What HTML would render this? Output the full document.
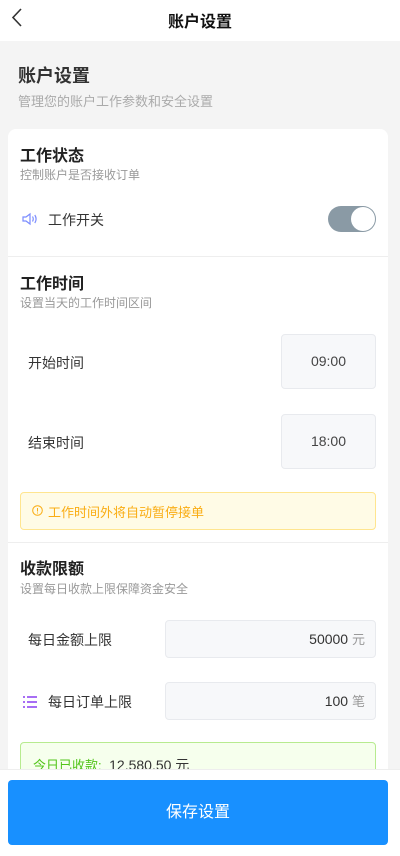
<!DOCTYPE html>
<html><head><meta charset="utf-8"><style>
*{margin:0;padding:0;box-sizing:border-box}
body{width:400px;height:856px;overflow:hidden;background:#f4f4f4;font-family:"Liberation Sans","Noto Sans CJK SC",sans-serif;color:#222;position:relative}
.abs{position:absolute}
.hdr{left:0;top:0;width:400px;height:41px;background:#fff}
.card{left:8px;top:129px;width:380px;height:700px;background:#fff;border-radius:8px}
.t{font-weight:bold;font-size:16px;color:#222}
.s{font-size:12px;color:#999}
.lbl{font-size:14px;color:#333}
.box{background:#f7f8fa;border:1px solid #e8eaee;border-radius:4px}
.div{left:8px;width:380px;height:1px;background:#eee}
</style></head><body>
<div class="abs hdr"></div>
<svg class="abs" style="left:10px;top:7px" width="14" height="22" viewBox="0 0 14 22"><path d="M11 2 L3 10.5 L11 19" fill="none" stroke="#333" stroke-width="1.6"/></svg>
<div class="abs" style="left:0;width:400px;top:8px;text-align:center;font-size:16px;font-weight:bold;color:#111">账户设置</div>
<div class="abs" style="left:18px;top:62px;font-size:18px;font-weight:bold;color:#333">账户设置</div>
<div class="abs" style="left:18px;top:91px;font-size:13px;color:#aaa">管理您的账户工作参数和安全设置</div>
<div class="abs card"></div>
<div class="abs t" style="left:20px;top:142px">工作状态</div>
<div class="abs s" style="left:20px;top:166px">控制账户是否接收订单</div>
<svg class="abs" style="left:22px;top:212px" width="16" height="14" viewBox="0 0 16 14"><path d="M1 5h3l4-3v10l-4-3H1z" fill="none" stroke="#7b8cff" stroke-width="1.2"/><path d="M10.5 4.5q1.5 2.5 0 5M12.8 3q2.6 4 0 8" fill="none" stroke="#7b8cff" stroke-width="1.2"/></svg>
<div class="abs lbl" style="left:48px;top:210px">工作开关</div>
<div class="abs" style="left:328px;top:206px;width:48px;height:26px;border-radius:13px;background:#8a9aa5"></div>
<div class="abs" style="left:351px;top:207px;width:24px;height:24px;border-radius:12px;background:#fff"></div>
<div class="abs div" style="top:256px"></div>
<div class="abs t" style="left:20px;top:270px">工作时间</div>
<div class="abs s" style="left:20px;top:294px">设置当天的工作时间区间</div>
<div class="abs lbl" style="left:28px;top:353px">开始时间</div>
<div class="abs box" style="left:281px;top:334px;width:95px;height:55px;text-align:center;line-height:53px;font-size:14px;color:#444">09:00</div>
<div class="abs lbl" style="left:28px;top:433px">结束时间</div>
<div class="abs box" style="left:281px;top:414px;width:95px;height:55px;text-align:center;line-height:53px;font-size:14px;color:#444">18:00</div>
<div class="abs" style="left:20px;top:492px;width:356px;height:38px;background:#fffbe6;border:1px solid #ffe58f;border-radius:4px"></div>
<svg class="abs" style="left:32px;top:505px" width="11" height="11" viewBox="0 0 11 11"><circle cx="5.5" cy="5.5" r="4.8" fill="none" stroke="#faad14"/><path d="M5.5 3v3.5M5.5 7.5v1" stroke="#faad14"/></svg>
<div class="abs" style="left:48px;top:502px;font-size:13px;color:#faad14">工作时间外将自动暂停接单</div>
<div class="abs div" style="top:542px"></div>
<div class="abs t" style="left:20px;top:555px">收款限额</div>
<div class="abs s" style="left:20px;top:580px">设置每日收款上限保障资金安全</div>
<div class="abs lbl" style="left:28px;top:630px">每日金额上限</div>
<div class="abs box" style="left:165px;top:620px;width:211px;height:38px;text-align:right;padding-right:10px;line-height:36px;font-size:14px;color:#333">50000 <span style="color:#999;font-size:13px">元</span></div>
<svg class="abs" style="left:22px;top:696px" width="16" height="12" viewBox="0 0 16 12"><path d="M1 1h2M1 6h2M1 11h2M5 1h10M5 6h10M5 11h10" stroke="#8a3ff0" stroke-width="1.4"/></svg>
<div class="abs lbl" style="left:48px;top:692px">每日订单上限</div>
<div class="abs box" style="left:165px;top:682px;width:211px;height:38px;text-align:right;padding-right:10px;line-height:36px;font-size:14px;color:#333">100 <span style="color:#999;font-size:13px">笔</span></div>
<div class="abs" style="left:20px;top:742px;width:356px;height:60px;background:#f6ffed;border:1px solid #b7eb8f;border-radius:4px"></div>
<div class="abs" style="left:33px;top:755px;font-size:13px;color:#52c41a">今日已收款: <span style="color:#333;font-size:14px">&nbsp;12,580.50 元</span></div>
<div class="abs" style="left:0;top:769px;width:400px;height:87px;background:#fff;border-top:1px solid #eee"></div>
<div class="abs" style="left:8px;top:780px;width:380px;height:65px;background:#1890ff;border-radius:4px;color:#fff;font-size:16px;text-align:center;line-height:65px">保存设置</div>
</body></html>
